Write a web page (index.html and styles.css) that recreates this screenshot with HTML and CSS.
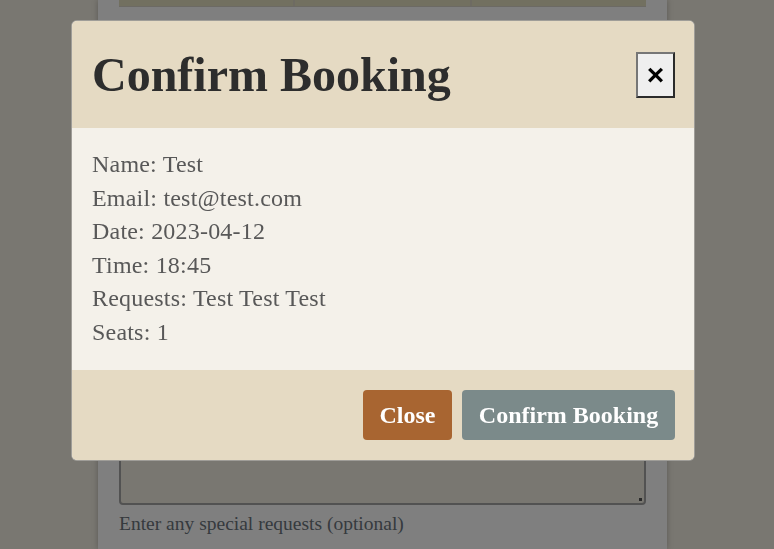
FILE: index.html
```html
<!DOCTYPE html>
<html lang="en">
<head>
<meta charset="utf-8">
<title>Confirm Booking</title>
<link rel="stylesheet" href="styles.css">
</head>
<body>
<div class="page">
  <div class="card">
    <div class="tabs">
      <div class="tab"></div>
      <div class="tab"></div>
      <div class="tab"></div>
    </div>
    <p class="hint hint-top">Choose the number of seats you require</p>
    <div class="field-spacer"></div>
    <div class="textarea"><span class="grip"></span></div>
    <p class="hint">Enter any special requests (optional)</p>
  </div>
</div>

<div class="backdrop">
  <div class="modal">
    <div class="modal-header">
      <h1 class="modal-title">Confirm Booking</h1>
      <button class="btn-x" type="button">×</button>
    </div>
    <div class="modal-body">
      <p>Name: Test</p>
      <p>Email: test@test.com</p>
      <p>Date: 2023-04-12</p>
      <p>Time: 18:45</p>
      <p>Requests: Test Test Test</p>
      <p>Seats: 1</p>
    </div>
    <div class="modal-footer">
      <button class="btn btn-close" type="button">Close</button>
      <button class="btn btn-confirm" type="button">Confirm Booking</button>
    </div>
  </div>
</div>
</body>
</html>
```
FILE: styles.css
```css
* { box-sizing: border-box; }

html, body {
  margin: 0;
  height: 100%;
  overflow: hidden;
}

body {
  background: #f2eee2;
  font-family: "Liberation Serif", "DejaVu Serif", serif;
}

.page {
  height: 100%;
  padding-left: 98px;
}

.card {
  width: 569px;
  height: 100%;
  background: #ffffff;
  box-shadow: 0 0 6px rgba(0, 0, 0, 0.25);
  padding: 0 21px;
  display: flex;
  flex-direction: column;
}

.tabs {
  display: flex;
  height: 7px;
  background: #e5e1c1;
  border-bottom: 1px solid #d8d4c8;
}

.tab {
  flex: 1;
  border-right: 2px solid #dcd6c4;
}
.tab:last-child { border-right: 0; }

.hint {
  margin: 0;
  font-size: 19.5px;
  line-height: 26px;
  color: #6c757d;
}

.hint-top {
  margin-top: 10px;
}

.field-spacer {
  flex: 0 0 314px;
}

.textarea {
  height: 148px;
  border: 2px solid #a4a4a4;
  border-radius: 4px;
  background: #f2eee2;
  position: relative;
}

.grip {
  position: absolute;
  right: 2px;
  bottom: 2px;
  width: 3px;
  height: 3px;
  background: #555;
}

.textarea + .hint {
  margin-top: 6px;
}

.backdrop {
  position: fixed;
  inset: 0;
  background: rgba(0, 0, 0, 0.5);
  padding: 20px 0 0 71px;
}

.modal {
  width: 624px;
  border: 1px solid rgba(0, 0, 0, 0.35);
  border-radius: 6px;
  overflow: hidden;
  background: #f4f1ea;
}

.modal-header {
  height: 107px;
  background: #e5dac3;
  padding: 0 19px 0 20px;
  display: flex;
  align-items: center;
  justify-content: space-between;
}

.modal-title {
  margin: 0;
  font-size: 48px;
  line-height: 1.2;
  font-weight: 700;
  color: #2d2d2d;
}

.btn-x {
  width: 39px;
  height: 46px;
  padding: 0;
  background: #efefef;
  border: 2px solid;
  border-color: #767676 #2b2b2b #2b2b2b #767676;
  font-family: "Liberation Sans", Arial, sans-serif;
  font-size: 30px;
  font-weight: 700;
  line-height: 1;
  color: #000;
}

.modal-body {
  padding: 20px 20px;
  height: 242px;
}

.modal-body p {
  margin: 0;
  font-size: 24px;
  line-height: 33.6px;
  letter-spacing: 0.2px;
  color: #585858;
}

.modal-footer {
  height: 90px;
  background: #e5dac3;
  padding: 0 19px;
  display: flex;
  align-items: center;
  justify-content: flex-end;
  gap: 10px;
}

.btn {
  height: 50px;
  border: 0;
  border-radius: 4px;
  padding: 0 16px;
  font-family: "Liberation Serif", "DejaVu Serif", serif;
  font-size: 24px;
  font-weight: 700;
  color: #ffffff;
}

.btn-close {
  width: 89px;
  background: #a86531;
}

.btn-confirm {
  width: 213px;
  background: #7b8a8a;
}
```
